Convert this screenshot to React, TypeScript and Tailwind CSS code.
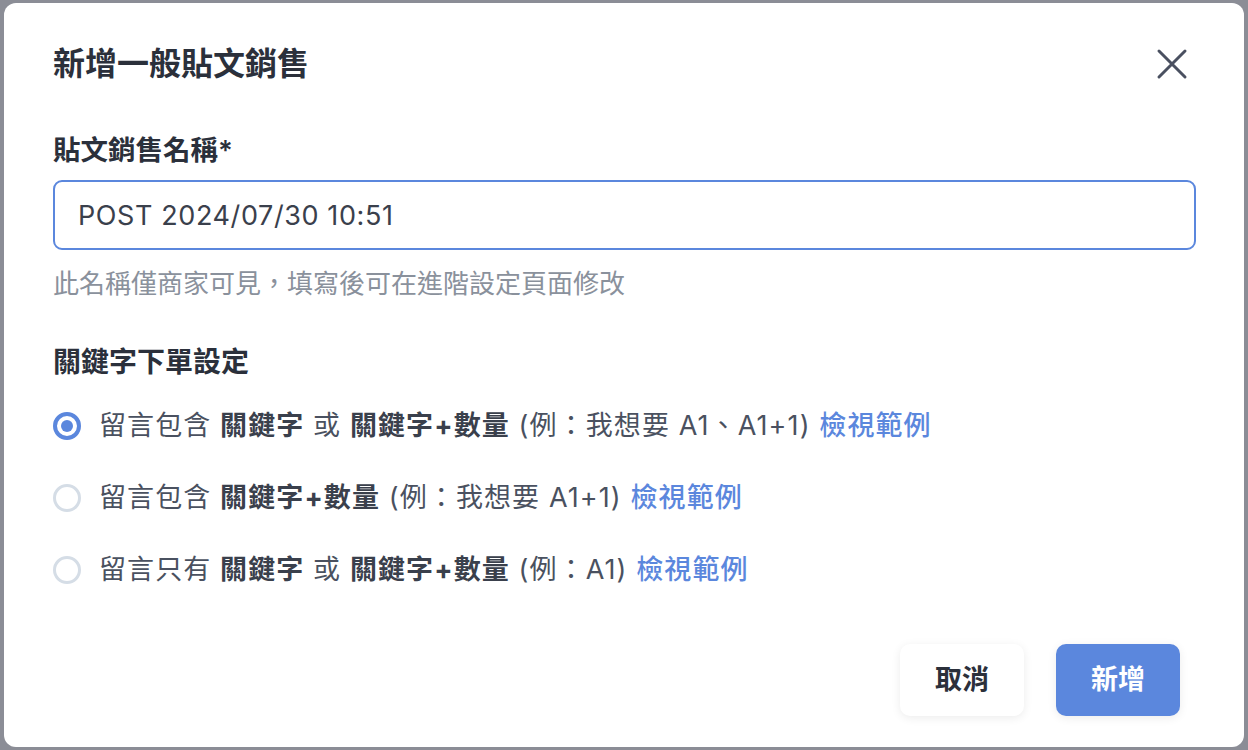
import { useState } from "react";

const font = { fontFamily: 'Inter, "Noto Sans CJK TC", "Noto Sans", sans-serif' };

type Option = {
	id: string;
	lead: string;
	parts: { text: string; bold?: boolean }[];
};

const options: Option[] = [
	{
		id: "a",
		lead: "留言包含",
		parts: [
			{ text: "關鍵字", bold: true },
			{ text: " 或 " },
			{ text: "關鍵字+數量", bold: true },
			{ text: " (例：我想要 A1、A1+1) " },
		],
	},
	{
		id: "b",
		lead: "留言包含",
		parts: [{ text: "關鍵字+數量", bold: true }, { text: " (例：我想要 A1+1) " }],
	},
	{
		id: "c",
		lead: "留言只有",
		parts: [
			{ text: "關鍵字", bold: true },
			{ text: " 或 " },
			{ text: "關鍵字+數量", bold: true },
			{ text: " (例：A1) " },
		],
	},
];

function Radio({ checked }: { checked: boolean }) {
	return checked ? (
		<span className="flex h-[28px] w-[28px] shrink-0 items-center justify-center rounded-full border-[4px] border-[#5b87dd] bg-white">
			<span className="h-[12px] w-[12px] rounded-full bg-[#5b87dd]" />
		</span>
	) : (
		<span className="h-[28px] w-[28px] shrink-0 rounded-full border-[3px] border-[#d5dde6] bg-white" />
	);
}

export default function App() {
	const [name, setName] = useState("POST 2024/07/30 10:51");
	const [mode, setMode] = useState("a");

	return (
		<div className="flex h-[750px] w-[1248px] bg-[#8b8d96] pb-[3px] pl-[4px] pr-[4px] pt-[3px]" style={font}>
			<div className="flex flex-1 flex-col rounded-[12px] bg-white pl-[49px] pr-[48px] pt-[41px]">
				<div className="flex h-[40px] items-center justify-between">
					<h1 className="text-[32px] font-bold leading-[40px] text-[#2b303b]">新增一般貼文銷售</h1>
					<button className="flex h-[48px] w-[48px] items-center justify-center">
						<svg width="48" height="48" viewBox="0 0 48 48" fill="none">
							<path d="M11 11 L37 37 M37 11 L11 37" stroke="#4a5060" strokeWidth="3" strokeLinecap="round" />
						</svg>
					</button>
				</div>

				<label className="mt-[48px] text-[27.5px] font-semibold leading-[36px] text-[#2b303b]">貼文銷售名稱*</label>
				<input
					value={name}
					onChange={(e) => setName(e.target.value)}
					className="mt-[12px] h-[70px] w-full rounded-[9px] border-2 border-[#5b87dd] px-[23px] text-[27px] tracking-[0.6px] text-[#3a404c] outline-none"
				/>
				<p className="mt-[16px] text-[26px] leading-[36px] text-[#8a919c]">此名稱僅商家可見，填寫後可在進階設定頁面修改</p>

				<h2 className="mt-[42px] text-[28px] font-semibold leading-[36px] text-[#2b303b]">關鍵字下單設定</h2>

				<div className="mt-[28px] flex flex-col gap-[36px]">
					{options.map((o) => (
						<label key={o.id} className="flex h-[36px] cursor-pointer items-center gap-[18px]" onClick={() => setMode(o.id)}>
							<Radio checked={mode === o.id} />
							<span className="whitespace-pre text-[27px] leading-[36px] tracking-[1.1px] text-[#4a5160]">
								{o.lead}{" "}
								{o.parts.map((p, i) => (
									<span key={i} className={p.bold ? "font-bold text-[#3a404c]" : ""}>
										{p.text}
									</span>
								))}
								<span className="font-medium text-[#5b87dd]">檢視範例</span>
							</span>
						</label>
					))}
				</div>

				<div className="mt-[56px] flex justify-end gap-[32px] pr-[16px]">
					<button className="h-[72px] w-[124px] rounded-[10px] bg-white text-[27px] font-bold text-[#2b303b] shadow-[0_2px_10px_rgba(0,0,0,0.08)]">
						取消
					</button>
					<button className="h-[72px] w-[124px] rounded-[10px] bg-[#5b87dd] text-[27px] font-bold text-white shadow-[0_2px_10px_rgba(0,0,0,0.08)]">
						新增
					</button>
				</div>
			</div>
		</div>
	);
}
